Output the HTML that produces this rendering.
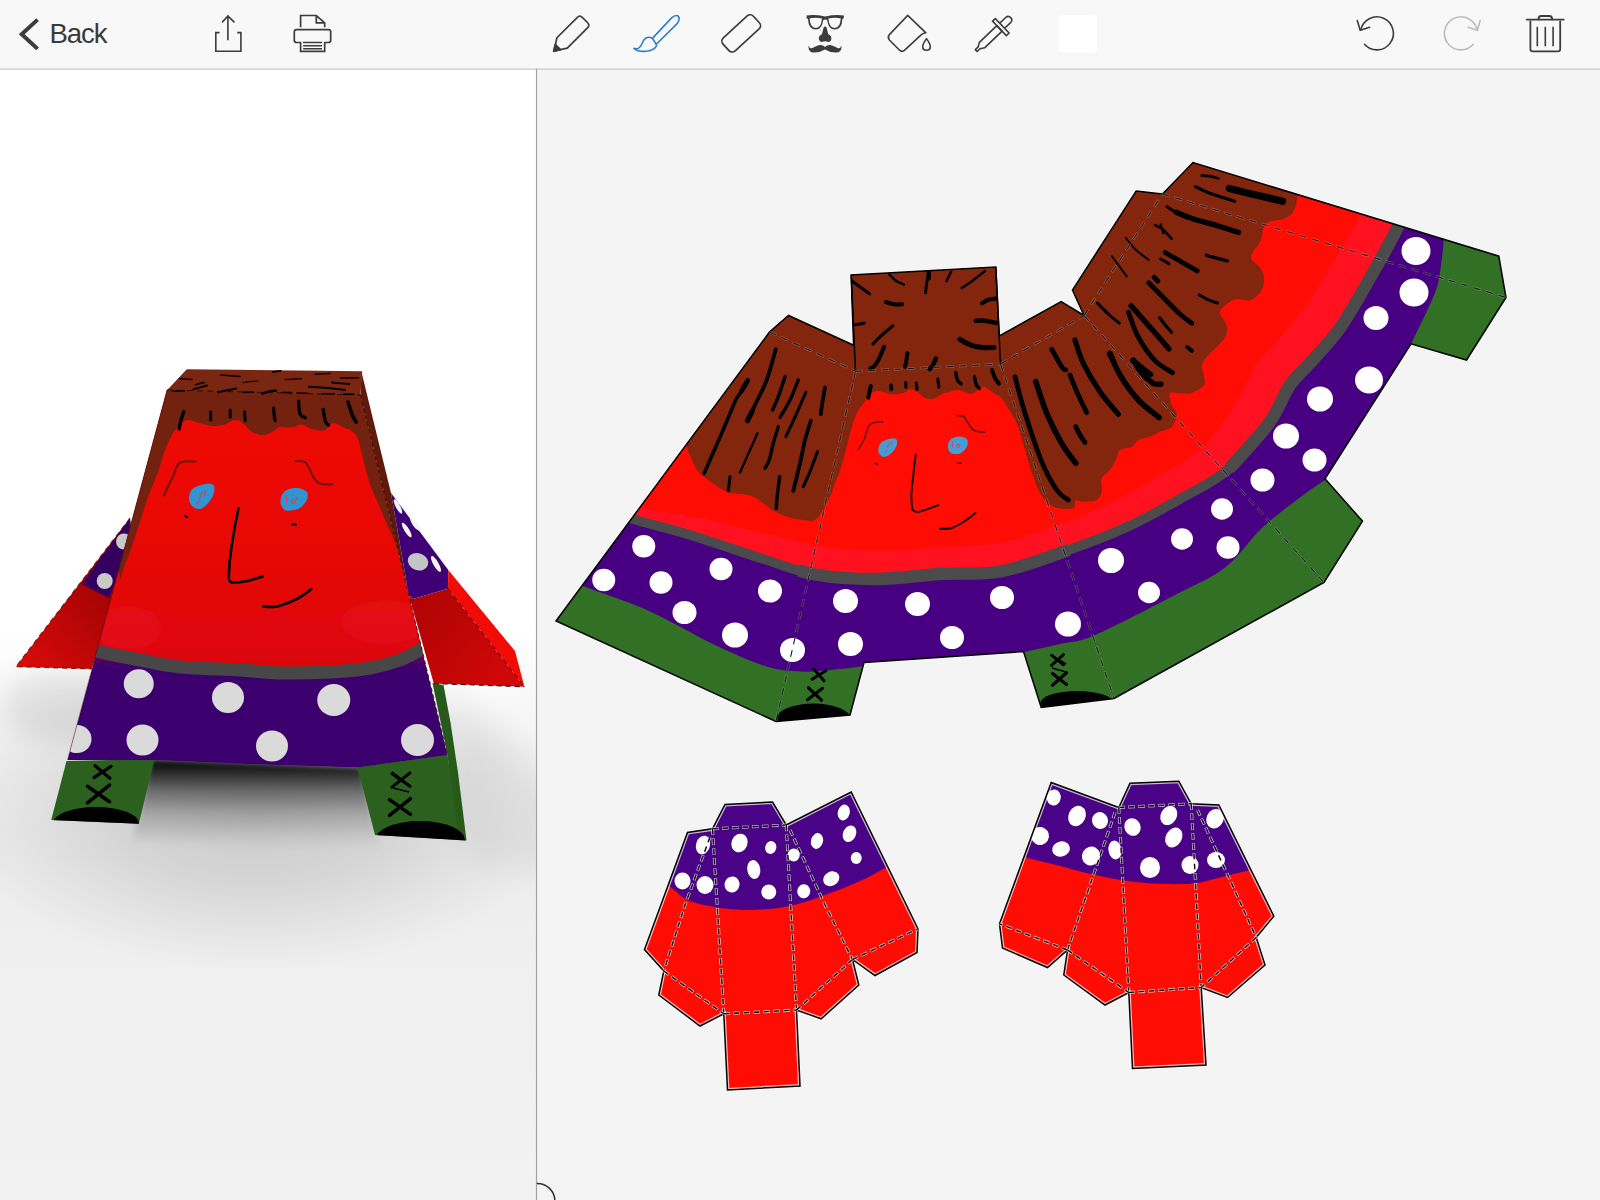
<!DOCTYPE html>
<html><head><meta charset="utf-8">
<style>
html,body{margin:0;padding:0;background:#f4f4f4;}
body{width:1600px;height:1200px;overflow:hidden;position:relative;font-family:"Liberation Sans",sans-serif;}
#bar{position:absolute;left:0;top:0;width:1600px;height:69px;background:#f8f8f8;}
#back{position:absolute;left:49.6px;top:18.1px;font-size:27.6px;line-height:32px;color:#3a3a3a;letter-spacing:-1.15px;}
#left{position:absolute;left:0;top:69px;width:537px;height:1131px;background:#fff;overflow:hidden;}
#right{position:absolute;left:537px;top:69px;width:1063px;height:1131px;background:#f4f4f4;}
svg{position:absolute;left:0;top:0;}
</style></head><body>
<div id="left"></div>
<div id="right"></div>
<div id="bar"><div id="back">Back</div></div>
<svg width="1600" height="1200" viewBox="0 0 1600 1200">
<defs><clipPath id="netclip"><polygon points="556.0,621.0 769.5,332.0 788.5,315.5 853.6,345.2 851.2,275.0 995.8,267.0 999.3,336.0 1061.2,301.5 1084.0,315.5 1072.5,290.0 1136.2,191.0 1162.5,194.0 1193.0,162.5 1498.8,256.2 1506.0,297.5 1466.5,360.0 1411.0,343.8 1325.0,478.8 1362.5,521.2 1324.0,582.5 1114.0,698.5 1041.2,707.5 1023.5,651.5 864.0,662.5 850.0,715.0 776.0,721.5"/></clipPath></defs>
<g clip-path="url(#netclip)">
<rect x="540" y="150" width="1000" height="600" fill="#317025"/>
<path d="M540.0,568.0C547.2,571.0 566.3,579.5 583.0,586.0C599.7,592.5 624.7,600.7 640.0,607.0C655.3,613.3 662.5,617.7 675.0,624.0C687.5,630.3 700.0,638.0 715.0,645.0C730.0,652.0 750.8,661.6 765.0,666.0C779.2,670.4 788.3,670.9 800.0,671.5C811.7,672.1 824.3,670.4 835.0,669.5C845.7,668.6 859.2,666.6 864.0,666.0 L864,676 L1023.5,665 L1023.5,652.0C1029.6,650.7 1048.1,646.8 1060.0,644.0C1071.9,641.2 1075.8,643.2 1095.0,635.0C1114.2,626.8 1153.3,606.2 1175.0,595.0C1196.7,583.8 1210.4,578.8 1225.0,567.5C1239.6,556.2 1250.0,539.2 1262.5,527.5C1275.0,515.8 1289.6,505.4 1300.0,497.5C1310.4,489.6 1320.8,482.9 1325.0,480.0 L1336,486 L1421,350 L1411.0,344.0C1413.3,339.2 1420.8,324.0 1425.0,315.0C1429.2,306.0 1433.5,297.1 1436.0,290.0C1438.5,282.9 1438.7,280.8 1440.0,272.5C1441.3,264.2 1442.8,252.1 1443.8,240.0C1444.8,227.9 1445.6,206.7 1446.0,200.0 L1446,100 L400,100 L400,540 Z" fill="#480082"/>
<path d="M600.0,508.0C605.7,509.9 619.0,515.0 634.0,519.5C649.0,524.0 668.2,528.3 690.0,535.0C711.8,541.7 744.2,552.9 765.0,559.5C785.8,566.1 796.3,571.2 815.0,574.5C833.7,577.8 856.2,579.1 877.0,579.0C897.8,578.9 919.5,575.2 940.0,574.0C960.5,572.8 979.5,575.2 1000.0,571.5C1020.5,567.8 1041.8,559.4 1063.0,552.0C1084.2,544.6 1107.5,535.8 1127.0,527.0C1146.5,518.2 1163.0,508.7 1180.0,499.0C1197.0,489.3 1214.2,481.7 1229.0,469.0C1243.8,456.3 1258.8,437.0 1269.0,423.0C1279.2,409.0 1283.2,395.0 1290.0,385.0C1296.8,375.0 1301.7,372.5 1310.0,363.0C1318.3,353.5 1330.0,342.2 1340.0,328.0C1350.0,313.8 1360.4,294.8 1370.0,278.0C1379.6,261.2 1390.8,241.3 1397.5,227.5C1404.2,213.7 1407.9,200.4 1410.0,195.0 L1410,100 L400,100 L400,480 Z" fill="#ff111f"/>
<path d="M600.0,500.0C608.3,501.7 633.3,507.0 650.0,510.0C666.7,513.0 680.0,513.8 700.0,518.0C720.0,522.2 750.0,530.3 770.0,535.0C790.0,539.7 801.7,543.3 820.0,546.0C838.3,548.7 860.0,550.8 880.0,551.0C900.0,551.2 920.0,548.3 940.0,547.0C960.0,545.7 980.8,546.5 1000.0,543.0C1019.2,539.5 1036.3,532.8 1055.0,526.0C1073.7,519.2 1094.2,510.7 1112.0,502.0C1129.8,493.3 1146.7,483.3 1162.0,474.0C1177.3,464.7 1191.5,458.2 1204.0,446.0C1216.5,433.8 1228.3,414.5 1237.0,401.0C1245.7,387.5 1249.3,375.0 1256.0,365.0C1262.7,355.0 1268.8,350.7 1277.0,341.0C1285.2,331.3 1295.7,320.2 1305.0,307.0C1314.3,293.8 1323.7,277.5 1333.0,262.0C1342.3,246.5 1354.3,226.8 1361.0,214.0C1367.7,201.2 1371.0,189.8 1373.0,185.0 L1380,100 L400,100 L400,440 Z" fill="#ff0d04"/>
<path d="M600.0,508.0C605.7,509.9 619.0,515.0 634.0,519.5C649.0,524.0 668.2,528.3 690.0,535.0C711.8,541.7 744.2,552.9 765.0,559.5C785.8,566.1 796.3,571.2 815.0,574.5C833.7,577.8 856.2,579.1 877.0,579.0C897.8,578.9 919.5,575.2 940.0,574.0C960.5,572.8 979.5,575.2 1000.0,571.5C1020.5,567.8 1041.8,559.4 1063.0,552.0C1084.2,544.6 1107.5,535.8 1127.0,527.0C1146.5,518.2 1163.0,508.7 1180.0,499.0C1197.0,489.3 1214.2,481.7 1229.0,469.0C1243.8,456.3 1262.3,430.7 1269.0,423.0" fill="none" stroke="#4b4b4b" stroke-width="9.6"/>
<clipPath id="frontpart"><polygon points="812,500 1046,480 1118,700 770,725"/></clipPath>
<path d="M600.0,508.0C605.7,509.9 619.0,515.0 634.0,519.5C649.0,524.0 668.2,528.3 690.0,535.0C711.8,541.7 744.2,552.9 765.0,559.5C785.8,566.1 796.3,571.2 815.0,574.5C833.7,577.8 856.2,579.1 877.0,579.0C897.8,578.9 919.5,575.2 940.0,574.0C960.5,572.8 979.5,575.2 1000.0,571.5C1020.5,567.8 1041.8,559.4 1063.0,552.0C1084.2,544.6 1107.5,535.8 1127.0,527.0C1146.5,518.2 1163.0,508.7 1180.0,499.0C1197.0,489.3 1214.2,481.7 1229.0,469.0C1243.8,456.3 1262.3,430.7 1269.0,423.0" fill="none" stroke="#4b4b4b" stroke-width="12.4" clip-path="url(#frontpart)"/>
<path d="M1229.0,469.0C1235.7,461.3 1258.8,437.0 1269.0,423.0C1279.2,409.0 1283.2,395.0 1290.0,385.0C1296.8,375.0 1301.7,372.5 1310.0,363.0C1318.3,353.5 1330.0,342.2 1340.0,328.0C1350.0,313.8 1360.4,294.8 1370.0,278.0C1379.6,261.2 1390.8,241.3 1397.5,227.5C1404.2,213.7 1407.9,200.4 1410.0,195.0" fill="none" stroke="#4b4b4b" stroke-width="12.5"/>
<path d="M686.0,445.0C686.8,447.0 688.5,452.6 690.5,457.0C692.5,461.4 695.3,467.9 698.3,471.7C701.3,475.5 704.7,477.2 708.3,480.0C711.9,482.8 716.4,486.1 720.0,488.3C723.6,490.5 726.1,492.3 730.0,493.3C733.9,494.3 739.4,493.6 743.3,494.2C747.2,494.8 750.0,495.2 753.3,496.7C756.6,498.2 760.0,500.9 763.3,503.3C766.6,505.7 769.4,508.6 773.3,510.8C777.2,513.0 782.2,515.2 786.7,516.7C791.2,518.2 795.6,518.9 800.0,519.5C804.4,520.1 809.9,521.4 813.3,520.5C816.7,519.6 818.5,516.3 820.5,514.0C822.5,511.7 823.4,509.6 825.0,506.7C826.6,503.8 828.3,500.6 830.0,496.7C831.7,492.8 833.3,487.6 835.0,483.3C836.7,479.0 838.2,476.6 840.0,471.0C841.8,465.4 843.9,457.7 846.0,450.0C848.1,442.3 850.5,431.5 852.5,425.0C854.5,418.5 856.3,414.3 858.0,411.0C859.7,407.7 860.8,407.3 862.5,405.0C864.2,402.7 866.1,399.2 868.0,397.0C869.9,394.8 871.6,392.8 873.6,391.8C875.6,390.8 877.0,390.9 880.0,391.2C883.0,391.6 887.8,393.9 891.7,394.2C895.6,394.5 900.2,393.8 903.3,393.0C906.4,392.2 908.0,389.7 910.3,389.5C912.6,389.3 915.0,390.4 917.3,391.8C919.6,393.2 921.6,396.5 924.3,397.7C927.0,398.9 930.8,399.4 933.7,398.8C936.6,398.2 939.1,395.4 941.8,394.2C944.5,393.0 947.5,392.5 950.0,391.8C952.5,391.1 954.7,390.1 957.0,390.1C959.3,390.1 961.7,391.1 964.0,391.8C966.3,392.5 968.9,394.4 971.0,394.2C973.1,394.0 974.8,392.0 976.8,390.7C978.8,389.4 980.8,386.8 982.7,386.6C984.7,386.4 986.4,388.2 988.5,389.5C990.6,390.8 993.3,392.8 995.5,394.2C997.7,395.6 999.4,395.7 1001.5,398.0C1003.6,400.3 1005.3,403.5 1008.0,408.0C1010.7,412.5 1014.7,418.0 1017.5,425.0C1020.3,432.0 1022.5,441.7 1025.0,450.0C1027.5,458.3 1030.0,467.8 1032.5,475.0C1035.0,482.2 1037.4,488.3 1040.0,493.0C1042.6,497.7 1045.2,500.8 1048.3,503.3C1051.3,505.9 1054.1,507.5 1058.3,508.3C1062.5,509.1 1070.4,509.6 1073.3,508.3C1076.2,507.0 1073.8,501.6 1075.5,500.5C1077.2,499.4 1079.8,501.8 1083.3,501.7C1086.8,501.6 1093.6,501.7 1096.7,500.0C1099.8,498.3 1100.9,495.3 1101.7,491.7C1102.5,488.1 1100.3,481.9 1101.7,478.3C1103.1,474.7 1107.5,473.3 1110.0,470.0C1112.5,466.7 1115.0,461.6 1116.7,458.3C1118.4,455.0 1117.5,451.9 1120.0,450.0C1122.5,448.1 1128.7,448.4 1131.7,446.7C1134.8,445.0 1135.2,441.7 1138.3,440.0C1141.3,438.3 1146.4,438.1 1150.0,436.7C1153.6,435.3 1156.7,433.1 1160.0,431.7C1163.3,430.3 1167.5,430.0 1170.0,428.3C1172.5,426.6 1173.9,424.2 1175.0,421.7C1176.1,419.2 1177.2,416.1 1176.7,413.3C1176.2,410.5 1172.8,408.4 1171.7,405.0C1170.6,401.6 1168.6,394.9 1170.0,393.0C1171.4,391.1 1176.4,393.3 1180.0,393.3C1183.6,393.3 1187.7,394.4 1191.7,393.0C1195.7,391.6 1202.0,388.1 1204.0,385.0C1206.0,381.9 1204.1,377.8 1203.7,374.5C1203.3,371.2 1201.2,368.4 1201.8,365.3C1202.4,362.2 1204.5,359.6 1207.3,356.2C1210.0,352.8 1215.2,348.6 1218.3,345.2C1221.4,341.8 1224.3,339.4 1225.7,336.0C1227.1,332.6 1227.5,328.7 1226.6,325.0C1225.7,321.3 1221.0,316.8 1220.2,314.0C1219.4,311.2 1219.6,310.9 1222.0,308.5C1224.4,306.1 1230.2,300.7 1234.8,299.3C1239.4,297.9 1245.2,301.5 1249.5,300.2C1253.8,299.0 1258.0,295.5 1260.5,292.0C1263.0,288.5 1264.2,283.2 1264.2,279.2C1264.2,275.2 1262.7,271.6 1260.5,268.2C1258.3,264.8 1252.5,261.8 1251.3,259.0C1250.1,256.2 1251.7,254.8 1253.2,251.7C1254.7,248.6 1258.7,245.0 1260.5,240.7C1262.3,236.4 1262.7,229.2 1264.2,226.0C1265.7,222.8 1266.4,222.6 1269.7,221.4C1273.0,220.2 1280.3,220.4 1284.3,218.7C1288.3,217.0 1291.3,214.8 1293.5,211.3C1295.7,207.8 1296.8,202.0 1297.2,197.6C1297.6,193.2 1296.2,187.1 1296.0,185.0 L1292,100 L600,100 L600,445 Z" fill="#83260d"/>
<ellipse cx="643.75" cy="546.25" rx="11.5" ry="11.2" fill="#fff"/>
<ellipse cx="603.75" cy="580" rx="11.5" ry="11.2" fill="#fff"/>
<ellipse cx="661" cy="582.5" rx="11.5" ry="11.2" fill="#fff"/>
<ellipse cx="721" cy="569" rx="11.5" ry="11.2" fill="#fff"/>
<ellipse cx="684.5" cy="612.5" rx="12" ry="11.6" fill="#fff"/>
<ellipse cx="770" cy="591" rx="12" ry="11.6" fill="#fff"/>
<ellipse cx="735" cy="635" rx="13" ry="12.6" fill="#fff"/>
<ellipse cx="792.5" cy="650" rx="12.5" ry="12.1" fill="#fff"/>
<ellipse cx="845.5" cy="601" rx="12.5" ry="12.1" fill="#fff"/>
<ellipse cx="850.5" cy="644" rx="12.5" ry="12.1" fill="#fff"/>
<ellipse cx="917.5" cy="604" rx="12.5" ry="12.1" fill="#fff"/>
<ellipse cx="952" cy="637.5" rx="12" ry="11.6" fill="#fff"/>
<ellipse cx="1002" cy="597.5" rx="12" ry="11.6" fill="#fff"/>
<ellipse cx="1068" cy="624" rx="13" ry="12.6" fill="#fff"/>
<ellipse cx="1111" cy="560.5" rx="13" ry="12.6" fill="#fff"/>
<ellipse cx="1149" cy="592.5" rx="11" ry="10.7" fill="#fff"/>
<ellipse cx="1182" cy="539" rx="11" ry="10.7" fill="#fff"/>
<ellipse cx="1228" cy="547.5" rx="11.5" ry="11.2" fill="#fff"/>
<ellipse cx="1222" cy="509" rx="11" ry="10.7" fill="#fff"/>
<ellipse cx="1262.5" cy="480" rx="12" ry="11.6" fill="#fff"/>
<ellipse cx="1286" cy="436" rx="13" ry="12.6" fill="#fff"/>
<ellipse cx="1314.5" cy="460" rx="12" ry="11.6" fill="#fff"/>
<ellipse cx="1320" cy="399" rx="13" ry="12.6" fill="#fff"/>
<ellipse cx="1369" cy="380" rx="14" ry="13.6" fill="#fff"/>
<ellipse cx="1376" cy="318" rx="12.5" ry="12.1" fill="#fff"/>
<ellipse cx="1414" cy="292.5" rx="14.5" ry="14.1" fill="#fff"/>
<ellipse cx="1416" cy="251" rx="14.5" ry="14.1" fill="#fff"/>
<path d="M747.5,380.8C746.2,382.9 742.1,389.8 740.0,393.3C737.9,396.8 738.0,395.0 735.0,401.7C732.0,408.4 726.8,421.4 721.7,433.3C716.6,445.2 707.1,466.6 704.2,473.3" fill="none" stroke="#000" stroke-width="3.56" stroke-linecap="round"/>
<path d="M747.8,380.5C746.8,382.2 742.5,389.2 741.5,391.0" fill="none" stroke="#000" stroke-width="4.83" stroke-linecap="round"/>
<path d="M775.8,349.2C774.3,354.3 770.2,370.7 766.7,380.0C763.2,389.3 758.2,398.2 755.0,405.0C751.8,411.8 748.8,418.2 747.5,420.8" fill="none" stroke="#000" stroke-width="3.79" stroke-linecap="round"/>
<path d="M752.0,411.5C751.2,413.1 748.2,419.2 747.5,420.8" fill="none" stroke="#000" stroke-width="5.05" stroke-linecap="round"/>
<path d="M785.0,376.7C783.9,380.0 780.4,391.1 778.3,396.7C776.2,402.2 773.5,407.8 772.5,410.0" fill="none" stroke="#000" stroke-width="3.44" stroke-linecap="round"/>
<path d="M798.3,380.0C796.9,383.3 793.0,393.8 790.0,400.0C787.0,406.2 781.7,414.6 780.0,417.5" fill="none" stroke="#000" stroke-width="3.44" stroke-linecap="round"/>
<path d="M805.8,392.5C804.3,396.0 800.0,405.9 796.7,413.3C793.4,420.7 787.6,432.8 785.8,436.7" fill="none" stroke="#000" stroke-width="3.11" stroke-linecap="round"/>
<path d="M825.0,387.5C824.6,389.9 823.2,397.2 822.5,401.7C821.8,406.1 821.1,412.1 820.8,414.2" fill="none" stroke="#000" stroke-width="3.79" stroke-linecap="round"/>
<path d="M757.5,433.3C756.2,436.1 752.9,443.5 750.0,450.0C747.1,456.5 741.7,468.8 740.0,472.5" fill="none" stroke="#000" stroke-width="2.30" stroke-linecap="round"/>
<path d="M778.3,426.7C777.5,429.5 774.8,437.8 773.3,443.3C771.8,448.9 770.6,455.8 769.2,460.0C767.8,464.2 765.7,466.9 765.0,468.3" fill="none" stroke="#000" stroke-width="3.44" stroke-linecap="round"/>
<path d="M810.8,420.8C809.8,424.0 806.8,432.9 805.0,440.0C803.2,447.1 802.0,454.8 800.0,463.3C798.0,471.8 794.4,486.2 793.3,490.8" fill="none" stroke="#000" stroke-width="3.79" stroke-linecap="round"/>
<path d="M817.5,451.7C816.2,455.0 812.4,465.9 810.0,471.7C807.6,477.5 804.4,484.2 803.3,486.7" fill="none" stroke="#000" stroke-width="3.11" stroke-linecap="round"/>
<path d="M730.0,476.7C729.7,479.1 728.6,488.4 728.3,490.8" fill="none" stroke="#000" stroke-width="3.11" stroke-linecap="round"/>
<path d="M779.7,476.7C779.3,479.5 778.1,488.0 777.5,493.3C776.9,498.6 776.5,505.8 776.3,508.3" fill="none" stroke="#000" stroke-width="3.44" stroke-linecap="round"/>
<path d="M852.0,281.0C854.9,283.1 866.6,291.7 869.5,293.8" fill="none" stroke="#000" stroke-width="3.08" stroke-linecap="round"/>
<path d="M889.3,274.6C890.5,275.7 893.9,279.4 896.3,281.0C898.7,282.6 902.6,283.9 903.9,284.5" fill="none" stroke="#000" stroke-width="2.52" stroke-linecap="round"/>
<path d="M928.4,272.8C928.1,274.6 927.2,280.0 926.7,283.3C926.2,286.6 925.7,291.1 925.5,292.7" fill="none" stroke="#000" stroke-width="2.94" stroke-linecap="round"/>
<path d="M928.9,272.6C928.9,273.6 928.7,277.5 928.7,278.5" fill="none" stroke="#000" stroke-width="4.20" stroke-linecap="round"/>
<path d="M951.2,271.7C950.4,273.2 947.3,279.4 946.5,281.0" fill="none" stroke="#000" stroke-width="2.52" stroke-linecap="round"/>
<path d="M985.0,271.0C982.9,272.7 976.1,278.2 972.2,281.0C968.3,283.8 963.5,286.8 961.7,288.0" fill="none" stroke="#000" stroke-width="2.52" stroke-linecap="round"/>
<path d="M885.8,302.0C887.2,302.4 891.3,303.9 894.0,304.3C896.7,304.7 900.8,304.3 902.2,304.3" fill="none" stroke="#000" stroke-width="4.06" stroke-linecap="round"/>
<path d="M982.1,303.2C983.2,302.6 986.3,300.5 988.5,299.7C990.7,298.9 994.3,298.7 995.5,298.5" fill="none" stroke="#000" stroke-width="4.06" stroke-linecap="round"/>
<path d="M855.5,324.8C857.0,324.5 862.8,323.3 864.2,323.0" fill="none" stroke="#000" stroke-width="3.08" stroke-linecap="round"/>
<path d="M975.7,320.7C977.2,320.7 981.5,320.3 985.0,320.7C988.5,321.1 994.8,322.6 996.7,323.0" fill="none" stroke="#000" stroke-width="4.48" stroke-linecap="round"/>
<path d="M892.8,325.9C891.0,327.4 885.6,331.7 882.3,334.7C879.0,337.7 874.5,342.4 873.0,344.0" fill="none" stroke="#000" stroke-width="3.08" stroke-linecap="round"/>
<path d="M959.9,339.3C961.8,340.3 967.2,343.8 971.0,345.2C974.8,346.6 978.9,347.1 982.7,347.5C986.5,347.9 991.9,347.5 993.8,347.5" fill="none" stroke="#000" stroke-width="5.04" stroke-linecap="round"/>
<path d="M884.1,346.9C883.2,348.9 880.4,356.0 878.8,359.2C877.1,362.4 875.7,364.6 874.2,366.2C872.8,367.8 870.8,368.1 870.1,368.5" fill="none" stroke="#000" stroke-width="4.06" stroke-linecap="round"/>
<path d="M907.4,353.3C907.2,354.7 906.6,359.3 906.2,361.5C905.9,363.7 905.3,365.9 905.1,366.8" fill="none" stroke="#000" stroke-width="4.06" stroke-linecap="round"/>
<path d="M936.0,358.6C935.4,359.8 933.6,363.9 932.5,365.6C931.4,367.4 930.1,368.5 929.6,369.1" fill="none" stroke="#000" stroke-width="4.48" stroke-linecap="round"/>
<path d="M870.7,386.0C870.3,387.9 868.7,395.8 868.3,397.7" fill="none" stroke="#000" stroke-width="4.06" stroke-linecap="round"/>
<path d="M891.1,385.4C891.1,386.1 891.3,388.8 891.3,389.5" fill="none" stroke="#000" stroke-width="3.64" stroke-linecap="round"/>
<path d="M905.7,382.5C905.7,383.3 905.9,386.4 905.9,387.2" fill="none" stroke="#000" stroke-width="3.08" stroke-linecap="round"/>
<path d="M916.2,383.1C916.4,384.2 917.0,388.4 917.1,389.5" fill="none" stroke="#000" stroke-width="3.08" stroke-linecap="round"/>
<path d="M937.8,379.0C937.9,380.4 938.7,385.8 938.9,387.2" fill="none" stroke="#000" stroke-width="3.08" stroke-linecap="round"/>
<path d="M955.8,372.6C956.1,373.9 956.7,378.4 957.6,380.2C958.5,382.0 960.5,383.1 961.1,383.7" fill="none" stroke="#000" stroke-width="3.50" stroke-linecap="round"/>
<path d="M974.5,376.7C974.8,378.1 975.5,382.9 976.2,384.8C977.0,386.7 978.7,387.7 979.2,388.3" fill="none" stroke="#000" stroke-width="3.50" stroke-linecap="round"/>
<path d="M992.0,370.2C992.6,371.7 994.3,376.8 995.5,379.0C996.7,381.2 998.4,382.9 999.0,383.7" fill="none" stroke="#000" stroke-width="4.06" stroke-linecap="round"/>
<path d="M1015.0,376.7C1016.7,382.8 1020.5,399.1 1025.0,413.3C1029.5,427.5 1036.4,448.9 1041.7,461.7C1047.0,474.5 1052.3,483.6 1056.7,490.0C1061.1,496.4 1066.4,498.3 1068.3,500.0" fill="none" stroke="#000" stroke-width="4.80" stroke-linecap="round"/>
<path d="M1035.8,381.7C1037.6,387.0 1042.4,403.0 1046.7,413.3C1051.0,423.6 1056.9,435.0 1061.7,443.3C1066.5,451.6 1073.5,460.0 1075.8,463.3" fill="none" stroke="#000" stroke-width="5.59" stroke-linecap="round"/>
<path d="M1051.7,349.2C1053.4,352.1 1059.4,363.2 1061.7,366.7C1064.0,370.2 1065.1,369.4 1065.8,370.0" fill="none" stroke="#000" stroke-width="4.80" stroke-linecap="round"/>
<path d="M1070.0,375.0C1071.4,378.3 1075.5,388.8 1078.3,395.0C1081.1,401.2 1085.3,409.6 1086.7,412.5" fill="none" stroke="#000" stroke-width="4.80" stroke-linecap="round"/>
<path d="M1075.0,340.0C1076.4,343.9 1079.1,354.7 1083.3,363.3C1087.5,371.9 1094.2,383.2 1100.0,391.7C1105.8,400.2 1115.2,410.4 1118.3,414.2" fill="none" stroke="#000" stroke-width="5.21" stroke-linecap="round"/>
<path d="M1110.0,353.3C1111.7,356.9 1115.3,367.2 1120.0,375.0C1124.7,382.8 1131.8,392.9 1138.3,400.0C1144.8,407.1 1155.7,414.6 1159.2,417.5" fill="none" stroke="#000" stroke-width="5.59" stroke-linecap="round"/>
<path d="M1133.3,360.0C1134.7,362.2 1138.4,369.4 1141.7,373.3C1145.0,377.2 1150.1,381.5 1153.3,383.3C1156.5,385.1 1159.5,384.1 1160.8,384.2" fill="none" stroke="#000" stroke-width="5.46" stroke-linecap="round"/>
<path d="M1075.8,426.7C1076.5,428.1 1078.5,432.4 1080.0,435.0C1081.5,437.6 1084.2,441.2 1085.0,442.5" fill="none" stroke="#000" stroke-width="4.80" stroke-linecap="round"/>
<path d="M1229.3,188.4C1233.6,189.5 1246.1,192.7 1255.0,194.8C1263.9,196.9 1277.9,200.2 1282.5,201.2" fill="none" stroke="#000" stroke-width="7.29" stroke-linecap="round"/>
<path d="M1201.8,175.6C1203.0,175.7 1206.5,175.6 1209.2,176.1C1212.0,176.6 1216.8,177.9 1218.3,178.3" fill="none" stroke="#000" stroke-width="2.60" stroke-linecap="round"/>
<path d="M1195.4,186.6C1197.7,187.7 1202.6,190.6 1209.2,193.0C1215.8,195.4 1230.5,199.9 1234.8,201.2" fill="none" stroke="#000" stroke-width="3.00" stroke-linecap="round"/>
<path d="M1167.0,206.8C1168.5,207.7 1171.9,210.3 1176.2,212.2C1180.5,214.2 1190.0,217.6 1192.7,218.7" fill="none" stroke="#000" stroke-width="3.00" stroke-linecap="round"/>
<path d="M1176.2,212.2C1179.0,213.3 1185.7,216.4 1192.7,218.7C1199.7,221.0 1210.7,223.7 1218.3,226.0C1225.9,228.3 1235.1,231.3 1238.5,232.4" fill="none" stroke="#000" stroke-width="5.31" stroke-linecap="round"/>
<path d="M1155.1,225.1C1156.5,225.9 1160.5,227.4 1163.3,229.7C1166.0,232.0 1170.2,237.3 1171.6,238.8" fill="none" stroke="#000" stroke-width="2.60" stroke-linecap="round"/>
<path d="M1160.6,224.2C1161.0,225.7 1162.8,231.8 1163.3,233.3" fill="none" stroke="#000" stroke-width="2.20" stroke-linecap="round"/>
<path d="M1125.8,237.9C1127.4,239.9 1132.0,246.1 1135.8,249.8C1139.6,253.5 1146.5,258.2 1148.7,259.9" fill="none" stroke="#000" stroke-width="1.90" stroke-linecap="round"/>
<path d="M1165.2,252.6C1167.3,253.8 1172.7,256.8 1178.0,259.9C1183.3,262.9 1194.0,269.1 1197.2,270.9" fill="none" stroke="#000" stroke-width="4.80" stroke-linecap="round"/>
<path d="M1160.6,259.0C1162.0,259.8 1167.4,262.8 1168.8,263.6" fill="none" stroke="#000" stroke-width="3.00" stroke-linecap="round"/>
<path d="M1206.4,255.3C1208.1,255.8 1213.0,257.2 1216.5,258.1C1220.0,259.0 1225.7,260.4 1227.5,260.8" fill="none" stroke="#000" stroke-width="3.30" stroke-linecap="round"/>
<path d="M1112.0,256.2C1113.2,257.9 1116.8,262.9 1119.3,266.3C1121.8,269.7 1125.5,274.7 1126.7,276.4" fill="none" stroke="#000" stroke-width="1.90" stroke-linecap="round"/>
<path d="M1154.2,277.3C1154.8,277.9 1157.2,280.4 1157.8,281.0" fill="none" stroke="#000" stroke-width="5.00" stroke-linecap="round"/>
<path d="M1148.7,282.8C1151.1,285.2 1158.1,292.3 1163.3,297.5C1168.5,302.7 1175.1,309.7 1179.8,314.0C1184.5,318.3 1189.8,321.7 1191.8,323.2" fill="none" stroke="#000" stroke-width="4.80" stroke-linecap="round"/>
<path d="M1199.1,294.8C1200.5,295.5 1204.2,297.9 1207.3,299.3C1210.3,300.7 1215.7,302.4 1217.4,303.0" fill="none" stroke="#000" stroke-width="3.00" stroke-linecap="round"/>
<path d="M1097.3,303.0C1099.1,304.8 1104.6,310.6 1108.3,314.0C1112.0,317.4 1117.5,321.7 1119.3,323.2" fill="none" stroke="#000" stroke-width="3.00" stroke-linecap="round"/>
<path d="M1131.2,305.8C1133.2,308.0 1138.8,314.5 1143.2,319.5C1147.6,324.5 1153.5,331.1 1157.8,336.0C1162.1,340.9 1167.0,346.7 1168.8,348.8" fill="none" stroke="#000" stroke-width="5.50" stroke-linecap="round"/>
<path d="M1159.7,317.7C1160.6,318.9 1163.2,322.6 1165.2,325.0C1167.2,327.4 1170.5,331.1 1171.6,332.3" fill="none" stroke="#000" stroke-width="3.30" stroke-linecap="round"/>
<path d="M1187.2,347.0C1188.0,347.6 1191.0,350.1 1191.8,350.7" fill="none" stroke="#000" stroke-width="4.00" stroke-linecap="round"/>
<path d="M1128.5,312.2C1130.0,316.2 1133.4,328.1 1137.7,336.0C1142.0,343.9 1148.4,353.7 1154.2,359.8C1160.0,365.9 1169.5,370.6 1172.5,372.7" fill="none" stroke="#000" stroke-width="4.80" stroke-linecap="round"/>
<path d="M1133.1,360.8C1134.5,361.8 1138.4,364.9 1141.3,367.2C1144.2,369.5 1149.0,373.3 1150.5,374.5" fill="none" stroke="#000" stroke-width="5.50" stroke-linecap="round"/>
<path d="M1108.3,354.3C1109.5,356.4 1113.2,362.9 1115.7,367.2C1118.2,371.5 1121.8,377.9 1123.0,380.0" fill="none" stroke="#000" stroke-width="3.30" stroke-linecap="round"/>
<ellipse cx="813.5" cy="718.5" rx="37" ry="15" fill="#000"/>
<ellipse cx="1077" cy="703" rx="36.5" ry="12" fill="#000"/>
<path d="M813,670.2L825,679.8M825,669.6L813,680.4" stroke="#000" stroke-width="3" fill="none" stroke-linecap="round" transform="rotate(10 819 675)"/>
<path d="M808,688.4L822,699.6M822,687.7L808,700.3" stroke="#000" stroke-width="3.2" fill="none" stroke-linecap="round" transform="rotate(5 815 694)"/>
<path d="M1051.5,655.2L1063.5,664.8M1063.5,654.6L1051.5,665.4" stroke="#000" stroke-width="2.8" fill="none" stroke-linecap="round" transform="rotate(0 1057.5 660)"/>
<path d="M1052.5,673.4L1066.5,684.6M1066.5,672.7L1052.5,685.3" stroke="#000" stroke-width="3.2" fill="none" stroke-linecap="round" transform="rotate(0 1059.5 679)"/>
<path d="M1051,655L1066,664M1052,668L1066,672" stroke="#000" stroke-width="1.6" fill="none"/>
<g fill="none" stroke="#1a0000" stroke-linecap="round" stroke-linejoin="round">
<path d="M858.4,449.4Q862,444 864.6,438.75Q866.5,432 868,427.5Q869.5,424 872.5,423Q877,421.8 882.6,421.9" stroke="#6e1404" stroke-width="1.6"/>
<path d="M956.9,415.7Q960.5,415.4 963.6,416.25Q966,419.5 968.1,423Q970.5,427.5 973.75,430.3Q978.5,432.5 985,432" stroke="#6e1404" stroke-width="1.6"/>
<path d="M915.8,454.5Q914.2,466 913,478.1Q911.8,487 911.3,495Q911.3,503 912.4,509.6Q914.5,512.4 918.6,511.9Q923.5,510.6 927.6,509.1Q933,507 938.3,505.1" stroke-width="2"/>
<path d="M940,528.75Q946,529 951.25,528.2Q958,525.5 963.6,522Q970,517.8 975.4,513" stroke-width="2"/>
<path d="M875.6,463.5L877.4,464.1M957.8,463.2H960.6" stroke-width="1.6"/>
</g>
<path d="M878.1,450Q878.6,445 881.5,442.1Q887,438.6 892.75,438.2Q897,438.4 897.25,441Q897.4,445.5 895,448.9Q892,453.2 888.25,455.6Q885,457.4 882.6,456.75Q878.4,454.5 878.1,450Z" fill="#469dd4"/>
<path d="M947.9,445.5Q948.4,441.2 951.25,438.75Q955.5,436.4 960.25,436.5Q965.2,437 967.6,439.9Q968.4,444.4 966.4,447.75Q964,451.4 960.25,453.4Q955.5,454.6 951.25,453.4Q947.6,450.4 947.9,445.5Z" fill="#469dd4"/>
<path d="M889.5,442.5l-2,5 M892.2,441.5l-0.8,3.4 M885.6,452.2l1.6,-2" stroke="#c4506a" stroke-width="1.1" fill="none" stroke-linecap="round"/>
<path d="M952.6,441.6v5.4 M958.2,444.4a1.5,1.6 0 1 0 0.1,0" stroke="#c4506a" stroke-width="1.1" fill="none" stroke-linecap="round"/>
</g>
<polygon points="556.0,621.0 769.5,332.0 788.5,315.5 853.6,345.2 851.2,275.0 995.8,267.0 999.3,336.0 1061.2,301.5 1084.0,315.5 1072.5,290.0 1136.2,191.0 1162.5,194.0 1193.0,162.5 1498.8,256.2 1506.0,297.5 1466.5,360.0 1411.0,343.8 1325.0,478.8 1362.5,521.2 1324.0,582.5 1114.0,698.5 1041.2,707.5 1023.5,651.5 864.0,662.5 850.0,715.0 776.0,721.5" fill="none" stroke="#000" stroke-width="1.5" stroke-linejoin="miter"/>
<polyline points="851.2,275.0 855.5,371.2" stroke="#000" stroke-width="1.5" fill="none"/>
<polyline points="995.8,267.0 1000.5,364.0" stroke="#000" stroke-width="1.5" fill="none"/>
<line x1="769.5" y1="332" x2="855.5" y2="371.25" stroke="#fff" stroke-opacity="0.24" stroke-width="2.6" stroke-dasharray="8 5" stroke-dashoffset="0.5"/>
<line x1="769.5" y1="332" x2="855.5" y2="371.25" stroke="#111" stroke-width="1.05" stroke-dasharray="7 6"/>
<line x1="855.5" y1="371.25" x2="776" y2="721.5" stroke="#fff" stroke-opacity="0.24" stroke-width="2.6" stroke-dasharray="8 5" stroke-dashoffset="0.5"/>
<line x1="855.5" y1="371.25" x2="776" y2="721.5" stroke="#111" stroke-width="1.05" stroke-dasharray="7 6"/>
<line x1="855.5" y1="371.25" x2="1000.5" y2="364" stroke="#fff" stroke-opacity="0.24" stroke-width="2.6" stroke-dasharray="8 5" stroke-dashoffset="0.5"/>
<line x1="855.5" y1="371.25" x2="1000.5" y2="364" stroke="#111" stroke-width="1.05" stroke-dasharray="7 6"/>
<line x1="1000.5" y1="364" x2="1114" y2="698.5" stroke="#fff" stroke-opacity="0.24" stroke-width="2.6" stroke-dasharray="8 5" stroke-dashoffset="0.5"/>
<line x1="1000.5" y1="364" x2="1114" y2="698.5" stroke="#111" stroke-width="1.05" stroke-dasharray="7 6"/>
<line x1="1000.5" y1="364" x2="1084" y2="315.5" stroke="#fff" stroke-opacity="0.24" stroke-width="2.6" stroke-dasharray="8 5" stroke-dashoffset="0.5"/>
<line x1="1000.5" y1="364" x2="1084" y2="315.5" stroke="#111" stroke-width="1.05" stroke-dasharray="7 6"/>
<line x1="1084" y1="315.5" x2="1324" y2="582.5" stroke="#fff" stroke-opacity="0.24" stroke-width="2.6" stroke-dasharray="8 5" stroke-dashoffset="0.5"/>
<line x1="1084" y1="315.5" x2="1324" y2="582.5" stroke="#111" stroke-width="1.05" stroke-dasharray="7 6"/>
<line x1="1084" y1="315.5" x2="1162.5" y2="194" stroke="#fff" stroke-opacity="0.24" stroke-width="2.6" stroke-dasharray="8 5" stroke-dashoffset="0.5"/>
<line x1="1084" y1="315.5" x2="1162.5" y2="194" stroke="#111" stroke-width="1.05" stroke-dasharray="7 6"/>
<line x1="1162.5" y1="194" x2="1506" y2="297.5" stroke="#fff" stroke-opacity="0.24" stroke-width="2.6" stroke-dasharray="8 5" stroke-dashoffset="0.5"/>
<line x1="1162.5" y1="194" x2="1506" y2="297.5" stroke="#111" stroke-width="1.05" stroke-dasharray="7 6"/>
<defs><clipPath id="hclip1"><polygon points="725.0,804.5 772.5,802.0 786.2,825.0 851.2,792.0 918.0,928.8 917.0,952.5 875.0,975.5 852.5,959.5 858.8,985.0 821.2,1018.8 796.5,1010.0 800.0,1086.0 727.5,1090.0 723.8,1013.8 700.0,1026.0 658.8,995.0 663.8,971.0 644.5,949.5 687.5,832.5 712.5,828.8"/></clipPath></defs>
<g clip-path="url(#hclip1)">
<polygon points="725.0,804.5 772.5,802.0 786.2,825.0 851.2,792.0 918.0,928.8 917.0,952.5 875.0,975.5 852.5,959.5 858.8,985.0 821.2,1018.8 796.5,1010.0 800.0,1086.0 727.5,1090.0 723.8,1013.8 700.0,1026.0 658.8,995.0 663.8,971.0 644.5,949.5 687.5,832.5 712.5,828.8" fill="#ff0d04"/>
<path d="M640.0,872.0C644.8,874.3 660.8,881.3 668.8,886.0C676.7,890.7 679.4,896.4 687.5,900.0C695.6,903.6 707.1,905.8 717.5,907.5C727.9,909.2 737.9,910.2 750.0,910.0C762.1,909.8 777.5,908.5 790.0,906.0C802.5,903.5 812.9,899.3 825.0,895.0C837.1,890.7 851.9,884.8 862.5,880.0C873.1,875.2 879.2,871.0 888.8,866.0C898.3,861.0 914.8,852.7 920.0,850.0 L930,780 L640,780 Z" fill="#4a0386"/>
<ellipse cx="703" cy="845" rx="7" ry="9.5" fill="#fff" transform="rotate(15 703 845)"/>
<ellipse cx="739.5" cy="843" rx="8" ry="9.5" fill="#fff" transform="rotate(20 739.5 843)"/>
<ellipse cx="770.75" cy="847.5" rx="5.5" ry="6.5" fill="#fff" transform="rotate(20 770.75 847.5)"/>
<ellipse cx="793.75" cy="855" rx="6" ry="6.5" fill="#fff" transform="rotate(0 793.75 855)"/>
<ellipse cx="817" cy="841" rx="6" ry="8" fill="#fff" transform="rotate(15 817 841)"/>
<ellipse cx="843.75" cy="812.5" rx="6" ry="8" fill="#fff" transform="rotate(15 843.75 812.5)"/>
<ellipse cx="849.5" cy="833.75" rx="6.5" ry="8.5" fill="#fff" transform="rotate(25 849.5 833.75)"/>
<ellipse cx="856.25" cy="858" rx="5.5" ry="6" fill="#fff" transform="rotate(0 856.25 858)"/>
<ellipse cx="831.25" cy="878.75" rx="8.5" ry="7" fill="#fff" transform="rotate(-30 831.25 878.75)"/>
<ellipse cx="803.75" cy="891.25" rx="6.5" ry="7" fill="#fff" transform="rotate(10 803.75 891.25)"/>
<ellipse cx="768.75" cy="892" rx="7.5" ry="7.5" fill="#fff" transform="rotate(0 768.75 892)"/>
<ellipse cx="753.75" cy="869.5" rx="6.5" ry="9.5" fill="#fff" transform="rotate(-10 753.75 869.5)"/>
<ellipse cx="732" cy="884.5" rx="7.5" ry="8" fill="#fff" transform="rotate(10 732 884.5)"/>
<ellipse cx="705" cy="885" rx="8.5" ry="9" fill="#fff" transform="rotate(0 705 885)"/>
<ellipse cx="682.5" cy="881" rx="8" ry="8.5" fill="#fff" transform="rotate(0 682.5 881)"/>
<polygon points="725.0,804.5 772.5,802.0 786.2,825.0 851.2,792.0 918.0,928.8 917.0,952.5 875.0,975.5 852.5,959.5 858.8,985.0 821.2,1018.8 796.5,1010.0 800.0,1086.0 727.5,1090.0 723.8,1013.8 700.0,1026.0 658.8,995.0 663.8,971.0 644.5,949.5 687.5,832.5 712.5,828.8" fill="none" stroke="#fff" stroke-opacity="0.7" stroke-width="4"/>
</g>
<polygon points="725.0,804.5 772.5,802.0 786.2,825.0 851.2,792.0 918.0,928.8 917.0,952.5 875.0,975.5 852.5,959.5 858.8,985.0 821.2,1018.8 796.5,1010.0 800.0,1086.0 727.5,1090.0 723.8,1013.8 700.0,1026.0 658.8,995.0 663.8,971.0 644.5,949.5 687.5,832.5 712.5,828.8" fill="none" stroke="#000" stroke-width="1.5" stroke-linejoin="miter"/>
<polyline points="712.5,828.8 786.2,825.0" fill="none" stroke="#fff" stroke-opacity="0.72" stroke-width="3" stroke-dasharray="6.6 3.4" stroke-dashoffset="0.5"/>
<polyline points="712.5,828.8 786.2,825.0" fill="none" stroke="#000" stroke-width="1.4" stroke-dasharray="5.6 4.4"/>
<polyline points="712.5,828.8 723.8,1013.8" fill="none" stroke="#fff" stroke-opacity="0.72" stroke-width="3" stroke-dasharray="6.6 3.4" stroke-dashoffset="0.5"/>
<polyline points="712.5,828.8 723.8,1013.8" fill="none" stroke="#000" stroke-width="1.4" stroke-dasharray="5.6 4.4"/>
<polyline points="786.2,825.0 796.5,1010.0" fill="none" stroke="#fff" stroke-opacity="0.72" stroke-width="3" stroke-dasharray="6.6 3.4" stroke-dashoffset="0.5"/>
<polyline points="786.2,825.0 796.5,1010.0" fill="none" stroke="#000" stroke-width="1.4" stroke-dasharray="5.6 4.4"/>
<polyline points="723.8,1013.8 796.5,1010.0" fill="none" stroke="#fff" stroke-opacity="0.72" stroke-width="3" stroke-dasharray="6.6 3.4" stroke-dashoffset="0.5"/>
<polyline points="723.8,1013.8 796.5,1010.0" fill="none" stroke="#000" stroke-width="1.4" stroke-dasharray="5.6 4.4"/>
<polyline points="710.0,837.0 685.0,905.0 663.8,971.0" fill="none" stroke="#fff" stroke-opacity="0.72" stroke-width="3" stroke-dasharray="6.6 3.4" stroke-dashoffset="0.5"/>
<polyline points="710.0,837.0 685.0,905.0 663.8,971.0" fill="none" stroke="#000" stroke-width="1.4" stroke-dasharray="5.6 4.4"/>
<polyline points="663.8,971.0 723.8,1013.8" fill="none" stroke="#fff" stroke-opacity="0.72" stroke-width="3" stroke-dasharray="6.6 3.4" stroke-dashoffset="0.5"/>
<polyline points="663.8,971.0 723.8,1013.8" fill="none" stroke="#000" stroke-width="1.4" stroke-dasharray="5.6 4.4"/>
<polyline points="790.0,830.0 825.0,905.0 852.5,959.5" fill="none" stroke="#fff" stroke-opacity="0.72" stroke-width="3" stroke-dasharray="6.6 3.4" stroke-dashoffset="0.5"/>
<polyline points="790.0,830.0 825.0,905.0 852.5,959.5" fill="none" stroke="#000" stroke-width="1.4" stroke-dasharray="5.6 4.4"/>
<polyline points="852.5,959.5 796.5,1010.0" fill="none" stroke="#fff" stroke-opacity="0.72" stroke-width="3" stroke-dasharray="6.6 3.4" stroke-dashoffset="0.5"/>
<polyline points="852.5,959.5 796.5,1010.0" fill="none" stroke="#000" stroke-width="1.4" stroke-dasharray="5.6 4.4"/>
<polyline points="852.5,959.5 918.0,928.8" fill="none" stroke="#fff" stroke-opacity="0.72" stroke-width="3" stroke-dasharray="6.6 3.4" stroke-dashoffset="0.5"/>
<polyline points="852.5,959.5 918.0,928.8" fill="none" stroke="#000" stroke-width="1.4" stroke-dasharray="5.6 4.4"/>
<defs><clipPath id="hclip2"><polygon points="1130.0,783.2 1178.8,781.2 1191.2,803.8 1218.8,805.0 1273.8,916.2 1256.2,937.5 1265.0,965.0 1227.5,997.5 1201.2,987.5 1206.0,1065.0 1132.5,1068.5 1128.8,992.5 1105.0,1005.0 1063.8,975.0 1067.5,950.0 1047.5,967.5 1002.5,948.0 999.5,923.8 1051.2,782.5 1118.8,807.5"/></clipPath></defs>
<g clip-path="url(#hclip2)">
<polygon points="1130.0,783.2 1178.8,781.2 1191.2,803.8 1218.8,805.0 1273.8,916.2 1256.2,937.5 1265.0,965.0 1227.5,997.5 1201.2,987.5 1206.0,1065.0 1132.5,1068.5 1128.8,992.5 1105.0,1005.0 1063.8,975.0 1067.5,950.0 1047.5,967.5 1002.5,948.0 999.5,923.8 1051.2,782.5 1118.8,807.5" fill="#ff0d04"/>
<path d="M1000.0,848.0C1004.4,849.6 1016.2,854.5 1026.2,857.5C1036.2,860.5 1048.5,863.1 1060.0,866.0C1071.5,868.9 1081.7,872.2 1095.0,875.0C1108.3,877.8 1124.2,881.0 1140.0,882.5C1155.8,884.0 1176.7,884.6 1190.0,883.8C1203.3,882.9 1210.0,879.8 1220.0,877.5C1230.0,875.2 1239.2,872.6 1250.0,870.0C1260.8,867.4 1279.2,863.3 1285.0,862.0 L1290,770 L1000,770 Z" fill="#4a0386"/>
<ellipse cx="1053.75" cy="797.5" rx="7" ry="8" fill="#fff" transform="rotate(10 1053.75 797.5)"/>
<ellipse cx="1077" cy="816" rx="8.5" ry="10.5" fill="#fff" transform="rotate(25 1077 816)"/>
<ellipse cx="1100" cy="820.5" rx="8" ry="8.5" fill="#fff" transform="rotate(-20 1100 820.5)"/>
<ellipse cx="1040" cy="836" rx="9" ry="9" fill="#fff" transform="rotate(30 1040 836)"/>
<ellipse cx="1061" cy="849" rx="9" ry="7.5" fill="#fff" transform="rotate(-15 1061 849)"/>
<ellipse cx="1091" cy="856" rx="9" ry="9.5" fill="#fff" transform="rotate(30 1091 856)"/>
<ellipse cx="1115" cy="850" rx="6.5" ry="9.5" fill="#fff" transform="rotate(-10 1115 850)"/>
<ellipse cx="1132.5" cy="827" rx="8" ry="9" fill="#fff" transform="rotate(-25 1132.5 827)"/>
<ellipse cx="1168.75" cy="815.5" rx="8" ry="10" fill="#fff" transform="rotate(30 1168.75 815.5)"/>
<ellipse cx="1173.75" cy="837.5" rx="8" ry="10.5" fill="#fff" transform="rotate(30 1173.75 837.5)"/>
<ellipse cx="1150" cy="867.5" rx="10" ry="10.5" fill="#fff" transform="rotate(0 1150 867.5)"/>
<ellipse cx="1190" cy="865" rx="8.5" ry="9" fill="#fff" transform="rotate(0 1190 865)"/>
<ellipse cx="1216" cy="860" rx="9" ry="8" fill="#fff" transform="rotate(0 1216 860)"/>
<ellipse cx="1215" cy="818.75" rx="8.5" ry="10" fill="#fff" transform="rotate(25 1215 818.75)"/>
<polygon points="1130.0,783.2 1178.8,781.2 1191.2,803.8 1218.8,805.0 1273.8,916.2 1256.2,937.5 1265.0,965.0 1227.5,997.5 1201.2,987.5 1206.0,1065.0 1132.5,1068.5 1128.8,992.5 1105.0,1005.0 1063.8,975.0 1067.5,950.0 1047.5,967.5 1002.5,948.0 999.5,923.8 1051.2,782.5 1118.8,807.5" fill="none" stroke="#fff" stroke-opacity="0.7" stroke-width="4"/>
</g>
<polygon points="1130.0,783.2 1178.8,781.2 1191.2,803.8 1218.8,805.0 1273.8,916.2 1256.2,937.5 1265.0,965.0 1227.5,997.5 1201.2,987.5 1206.0,1065.0 1132.5,1068.5 1128.8,992.5 1105.0,1005.0 1063.8,975.0 1067.5,950.0 1047.5,967.5 1002.5,948.0 999.5,923.8 1051.2,782.5 1118.8,807.5" fill="none" stroke="#000" stroke-width="1.5" stroke-linejoin="miter"/>
<polyline points="1118.8,807.5 1191.2,803.8" fill="none" stroke="#fff" stroke-opacity="0.72" stroke-width="3" stroke-dasharray="6.6 3.4" stroke-dashoffset="0.5"/>
<polyline points="1118.8,807.5 1191.2,803.8" fill="none" stroke="#000" stroke-width="1.4" stroke-dasharray="5.6 4.4"/>
<polyline points="1118.8,807.5 1128.8,992.5" fill="none" stroke="#fff" stroke-opacity="0.72" stroke-width="3" stroke-dasharray="6.6 3.4" stroke-dashoffset="0.5"/>
<polyline points="1118.8,807.5 1128.8,992.5" fill="none" stroke="#000" stroke-width="1.4" stroke-dasharray="5.6 4.4"/>
<polyline points="1191.2,803.8 1201.2,987.5" fill="none" stroke="#fff" stroke-opacity="0.72" stroke-width="3" stroke-dasharray="6.6 3.4" stroke-dashoffset="0.5"/>
<polyline points="1191.2,803.8 1201.2,987.5" fill="none" stroke="#000" stroke-width="1.4" stroke-dasharray="5.6 4.4"/>
<polyline points="1128.8,992.5 1201.2,987.5" fill="none" stroke="#fff" stroke-opacity="0.72" stroke-width="3" stroke-dasharray="6.6 3.4" stroke-dashoffset="0.5"/>
<polyline points="1128.8,992.5 1201.2,987.5" fill="none" stroke="#000" stroke-width="1.4" stroke-dasharray="5.6 4.4"/>
<polyline points="1115.0,812.5 1090.0,885.0 1067.5,950.0" fill="none" stroke="#fff" stroke-opacity="0.72" stroke-width="3" stroke-dasharray="6.6 3.4" stroke-dashoffset="0.5"/>
<polyline points="1115.0,812.5 1090.0,885.0 1067.5,950.0" fill="none" stroke="#000" stroke-width="1.4" stroke-dasharray="5.6 4.4"/>
<polyline points="1067.5,950.0 1128.8,992.5" fill="none" stroke="#fff" stroke-opacity="0.72" stroke-width="3" stroke-dasharray="6.6 3.4" stroke-dashoffset="0.5"/>
<polyline points="1067.5,950.0 1128.8,992.5" fill="none" stroke="#000" stroke-width="1.4" stroke-dasharray="5.6 4.4"/>
<polyline points="1067.5,950.0 999.5,923.8" fill="none" stroke="#fff" stroke-opacity="0.72" stroke-width="3" stroke-dasharray="6.6 3.4" stroke-dashoffset="0.5"/>
<polyline points="1067.5,950.0 999.5,923.8" fill="none" stroke="#000" stroke-width="1.4" stroke-dasharray="5.6 4.4"/>
<polyline points="1197.5,810.0 1230.0,880.0 1256.2,937.5" fill="none" stroke="#fff" stroke-opacity="0.72" stroke-width="3" stroke-dasharray="6.6 3.4" stroke-dashoffset="0.5"/>
<polyline points="1197.5,810.0 1230.0,880.0 1256.2,937.5" fill="none" stroke="#000" stroke-width="1.4" stroke-dasharray="5.6 4.4"/>
<polyline points="1256.2,937.5 1201.2,987.5" fill="none" stroke="#fff" stroke-opacity="0.72" stroke-width="3" stroke-dasharray="6.6 3.4" stroke-dashoffset="0.5"/>
<polyline points="1256.2,937.5 1201.2,987.5" fill="none" stroke="#000" stroke-width="1.4" stroke-dasharray="5.6 4.4"/>
<defs>
<linearGradient id="floor" gradientUnits="userSpaceOnUse" x1="0" y1="69" x2="0" y2="1200"><stop offset="0.0000" stop-color="#ffffff"/><stop offset="0.4872" stop-color="#ffffff"/><stop offset="0.5225" stop-color="#fcfcfc"/><stop offset="0.5579" stop-color="#f8f8f8"/><stop offset="0.6110" stop-color="#f1f1f1"/><stop offset="0.6729" stop-color="#ededed"/><stop offset="0.7347" stop-color="#eeeeee"/><stop offset="0.8232" stop-color="#f0f0f0"/><stop offset="0.9116" stop-color="#f1f1f1"/><stop offset="1.0000" stop-color="#f2f2f2"/></linearGradient>
<radialGradient id="floorlight" gradientUnits="userSpaceOnUse" cx="270" cy="640" r="330" gradientTransform="translate(270 640) scale(1 0.55) translate(-270 -640)"><stop offset="0" stop-color="#fff" stop-opacity="1"/><stop offset="0.6" stop-color="#fff" stop-opacity="0.85"/><stop offset="1" stop-color="#fff" stop-opacity="0"/></radialGradient>
<linearGradient id="ushadow" gradientUnits="userSpaceOnUse" x1="0" y1="758" x2="0" y2="850"><stop offset="0" stop-color="#000" stop-opacity="1"/><stop offset="0.12" stop-color="#000" stop-opacity="0.86"/><stop offset="0.35" stop-color="#000" stop-opacity="0.5"/><stop offset="0.6" stop-color="#000" stop-opacity="0.22"/><stop offset="0.85" stop-color="#000" stop-opacity="0.06"/><stop offset="1" stop-color="#000" stop-opacity="0"/></linearGradient>
<linearGradient id="redsh" gradientUnits="userSpaceOnUse" x1="0" y1="390" x2="0" y2="670"><stop offset="0" stop-color="#f00a04"/><stop offset="0.5" stop-color="#e90804"/><stop offset="0.8" stop-color="#e00806"/><stop offset="1" stop-color="#d90808"/></linearGradient>
<linearGradient id="armL" gradientUnits="userSpaceOnUse" x1="110" y1="590" x2="20" y2="668"><stop offset="0" stop-color="#a20303"/><stop offset="1" stop-color="#dc0a0a"/></linearGradient>
<linearGradient id="armR" gradientUnits="userSpaceOnUse" x1="415" y1="600" x2="520" y2="686"><stop offset="0" stop-color="#b00404"/><stop offset="1" stop-color="#d40808"/></linearGradient>
<filter id="blur8" x="-20%" y="-50%" width="140%" height="200%"><feGaussianBlur stdDeviation="8"/></filter>
<filter id="blur12" x="-50%" y="-50%" width="200%" height="200%"><feGaussianBlur stdDeviation="13"/></filter>
<filter id="blur3" x="-20%" y="-50%" width="140%" height="200%"><feGaussianBlur stdDeviation="3"/></filter>
<clipPath id="leftclip"><rect x="0" y="69" width="536" height="1131"/></clipPath>
</defs>
<g clip-path="url(#leftclip)">
<rect x="0" y="69" width="536" height="1131" fill="url(#floor)"/>
<radialGradient id="blob" cx="0.5" cy="0.5" r="0.5"><stop offset="0" stop-color="#000" stop-opacity="0.15"/><stop offset="0.45" stop-color="#000" stop-opacity="0.105"/><stop offset="0.75" stop-color="#000" stop-opacity="0.045"/><stop offset="1" stop-color="#000" stop-opacity="0"/></radialGradient>
<ellipse cx="255" cy="806" rx="315" ry="165" fill="url(#blob)"/>
<ellipse cx="62" cy="706" rx="62" ry="36" fill="#000" fill-opacity="0.085" filter="url(#blur12)"/>
<polygon points="150,758 362,766 380,850 132,842" fill="url(#ushadow)" filter="url(#blur3)"/>
<polygon points="446,700 500,735 560,800 560,880 470,862 455,800" fill="#000" fill-opacity="0.045" filter="url(#blur12)"/>
<polygon points="130.0,518.0 15.8,666.7 91.7,669.0 132.0,540.0" fill="url(#armL)" />
<polygon points="130.0,518.0 81.7,584.0 109.0,598.0 132.0,540.0" fill="#34005f" />
<ellipse cx="104.7" cy="581" rx="8" ry="8" fill="#c9c9c9"/>
<polyline points="130,518 15.8,666.7 91.7,669" fill="none" stroke="#4a0505" stroke-opacity="0.75" stroke-width="1.1" stroke-dasharray="5 4"/>
<ellipse cx="124" cy="541.5" rx="8" ry="8" fill="#c9c9c9"/>
<polygon points="361.5,372.0 360.5,395.0 408.8,595.0 391.0,493.0" fill="#5e1b0b" />
<polygon points="391.0,493.0 448.3,570.0 448.0,588.8 413.0,599.0 408.8,595.0" fill="#3e0074" />
<polygon points="413.0,599.0 448.0,588.8 524.4,686.7 433.8,683.5 408.8,595.0" fill="url(#armR)" />
<polygon points="448.3,570.0 515.0,651.0 524.4,686.7 448.0,588.8" fill="#f20c08" />
<ellipse cx="418" cy="561.7" rx="10.5" ry="8.5" fill="#c4c4c4" transform="rotate(20 418 561.7)"/>
<ellipse cx="398" cy="506.5" rx="2.2" ry="8" fill="#f4f4f4" transform="rotate(-28 398 506.5)"/>
<ellipse cx="406.7" cy="530" rx="2.4" ry="8.5" fill="#f4f4f4" transform="rotate(-32 406.7 530)"/>
<ellipse cx="415" cy="524" rx="2.4" ry="8" fill="#f4f4f4" transform="rotate(-35 415 524)"/>
<ellipse cx="436" cy="564" rx="2.6" ry="9" fill="#f4f4f4" transform="rotate(-30 436 564)"/>
<line x1="448" y1="588.75" x2="524.4" y2="686.7" stroke="#7a0a0a" stroke-width="1.2" stroke-dasharray="5 4"/>
<line x1="433.75" y1="683.5" x2="524.4" y2="686.7" stroke="#3a0505" stroke-width="1.2" stroke-dasharray="5 4"/>
<polygon points="432.5,683.0 443.5,685.0 450.5,722.5 458.0,772.5 466.5,840.5 457.0,840.0 447.5,755.0" fill="#27591b" />
<polygon points="66.5,761.0 51.2,820.0 138.8,823.8 154.5,759.0" fill="#2b601e" />
<polygon points="357.0,765.0 375.0,835.0 459.0,840.0 447.5,754.0" fill="#2b601e" />
<clipPath id="legL"><polygon points="66.5,761 51.25,820 138.75,823.75 154.5,759"/></clipPath>
<clipPath id="legR"><polygon points="357,765 375,835 466.5,840.5 447.5,754"/></clipPath>
<ellipse cx="96" cy="823" rx="43" ry="16" fill="#000" clip-path="url(#legL)"/>
<ellipse cx="420" cy="840" rx="45" ry="19" fill="#000" clip-path="url(#legR)"/>
<path d="M94.5,766.4L110.5,777.6M110.5,765.6L94.5,778.4" stroke="#000" stroke-width="3.2" fill="none" stroke-linecap="round" transform="rotate(5 102.5 772)"/>
<path d="M87.5,786.3L109.5,801.7M109.5,785.2L87.5,802.8" stroke="#000" stroke-width="3.6" fill="none" stroke-linecap="round" transform="rotate(0 98.5 794)"/>
<path d="M392,773.7L410,786.3M410,772.8L392,787.2" stroke="#000" stroke-width="3" fill="none" stroke-linecap="round" transform="rotate(0 401 780)"/>
<path d="M389.5,799.65L410.5,814.35M410.5,798.6L389.5,815.4" stroke="#000" stroke-width="3.4" fill="none" stroke-linecap="round" transform="rotate(0 400 807)"/>
<path d="M392,772L410,786M393,788L409,792" stroke="#000" stroke-width="1.8" fill="none"/>
<clipPath id="frontclip"><polygon points="167.0,390.0 360.5,395.0 447.5,755.0 357.5,767.5 240.0,763.8 154.5,760.0 67.5,760.0"/></clipPath>
<g clip-path="url(#frontclip)">
<polygon points="167.0,390.0 360.5,395.0 447.5,755.0 357.5,767.5 240.0,763.8 154.5,760.0 67.5,760.0" fill="#3b006e" />
<path d="M80.0,642.0C82.8,643.5 87.0,648.0 97.0,651.0C107.0,654.0 126.2,657.3 140.0,660.0C153.8,662.7 163.3,665.3 180.0,667.0C196.7,668.7 223.3,669.0 240.0,670.0C256.7,671.0 265.0,672.7 280.0,673.0C295.0,673.3 315.0,672.8 330.0,672.0C345.0,671.2 358.3,670.0 370.0,668.0C381.7,666.0 391.3,663.2 400.0,660.0C408.7,656.8 415.3,652.3 422.0,649.0C428.7,645.7 437.0,641.5 440.0,640.0 L440,380 L80,380 Z" fill="url(#redsh)"/>
<ellipse cx="128" cy="628" rx="34" ry="22" fill="#ea1c2a" fill-opacity="0.3" filter="url(#blur3)"/>
<ellipse cx="385" cy="622" rx="44" ry="22" fill="#ea1c2a" fill-opacity="0.3" filter="url(#blur3)"/>
<rect x="90" y="612" width="340" height="50" fill="#e81826" fill-opacity="0.22" filter="url(#blur3)"/>
<path d="M80.0,642.0C82.8,643.5 87.0,648.0 97.0,651.0C107.0,654.0 126.2,657.3 140.0,660.0C153.8,662.7 163.3,665.3 180.0,667.0C196.7,668.7 223.3,669.0 240.0,670.0C256.7,671.0 265.0,672.7 280.0,673.0C295.0,673.3 315.0,672.8 330.0,672.0C345.0,671.2 358.3,670.0 370.0,668.0C381.7,666.0 391.3,663.2 400.0,660.0C408.7,656.8 415.3,652.3 422.0,649.0C428.7,645.7 437.0,641.5 440.0,640.0" fill="none" stroke="#474747" stroke-width="13"/>
<path d="M80.0,642.0C82.8,643.5 87.0,648.0 97.0,651.0C107.0,654.0 126.2,657.3 140.0,660.0C153.8,662.7 163.3,665.3 180.0,667.0C196.7,668.7 223.3,669.0 240.0,670.0C256.7,671.0 265.0,672.7 280.0,673.0C295.0,673.3 315.0,672.8 330.0,672.0C345.0,671.2 358.3,670.0 370.0,668.0C381.7,666.0 391.3,663.2 400.0,660.0C408.7,656.8 415.3,652.3 422.0,649.0C428.7,645.7 437.0,641.5 440.0,640.0 L440,380 L80,380 Z" fill="none"/>
<ellipse cx="138.75" cy="683.75" rx="15" ry="14.5" fill="#dadada"/>
<ellipse cx="228" cy="697.5" rx="16" ry="15.5" fill="#dadada"/>
<ellipse cx="333.75" cy="700" rx="16.5" ry="16.0" fill="#dadada"/>
<ellipse cx="142.5" cy="740" rx="16" ry="15.5" fill="#dadada"/>
<ellipse cx="272" cy="746" rx="16" ry="15.5" fill="#dadada"/>
<ellipse cx="417.5" cy="740" rx="16.5" ry="16.0" fill="#dadada"/>
<ellipse cx="77" cy="739" rx="14.5" ry="14.1" fill="#dadada"/>
<path d="M120.0,580.0C120.8,577.5 123.0,570.5 125.0,565.0C127.0,559.5 129.2,554.2 131.7,547.0C134.2,539.8 137.3,530.3 140.0,522.0C142.7,513.7 145.0,505.3 148.0,497.0C151.0,488.7 155.2,479.8 158.0,472.0C160.8,464.2 162.6,456.3 165.0,450.0C167.4,443.7 170.0,438.2 172.5,434.0C175.0,429.8 177.5,427.3 180.0,425.0C182.5,422.7 184.2,420.3 187.5,420.0C190.8,419.7 195.2,422.0 199.5,423.0C203.8,424.0 208.8,425.8 213.0,426.0C217.2,426.2 221.5,425.5 225.0,424.5C228.5,423.5 231.0,420.2 234.0,420.0C237.0,419.8 240.0,421.0 243.0,423.0C246.0,425.0 248.5,430.0 252.0,432.0C255.5,434.0 260.2,435.2 264.0,435.0C267.8,434.8 271.8,431.9 274.5,430.5C277.2,429.1 277.5,427.2 280.5,426.8C283.5,426.2 289.0,427.9 292.5,427.5C296.0,427.1 298.2,424.2 301.5,424.5C304.8,424.8 308.2,428.0 312.0,429.0C315.8,430.0 320.5,431.5 324.0,430.5C327.5,429.5 329.8,423.5 333.0,423.0C336.2,422.5 340.5,426.2 343.5,427.5C346.5,428.8 348.8,428.9 351.0,430.5C353.2,432.1 355.3,433.8 357.0,437.0C358.7,440.2 359.5,444.5 361.0,450.0C362.5,455.5 364.3,463.8 366.0,470.0C367.7,476.2 369.0,481.5 371.0,487.0C373.0,492.5 375.7,497.5 378.0,503.0C380.3,508.5 382.7,514.7 385.0,520.0C387.3,525.3 389.8,530.0 392.0,535.0C394.2,540.0 397.0,547.5 398.0,550.0 L460,560 L460,380 L100,380 Z" fill="#73220f"/>
</g>
<polygon points="186.8,369.3 362.2,371.2 360.3,395.2 166.5,390.8" fill="#7b2611" />
<line x1="167" y1="390" x2="360.5" y2="395" stroke="#2a0c05" stroke-width="1" stroke-dasharray="6 4"/>
<path d="M183.7,411.7C183.2,413.3 181.4,418.6 180.7,421.5C179.9,424.4 179.4,427.8 179.2,429.0" fill="none" stroke="#000" stroke-width="3.4" stroke-linecap="round"/>
<path d="M210.7,411.7C210.7,413.1 210.7,418.6 210.7,420.0" fill="none" stroke="#000" stroke-width="3" stroke-linecap="round"/>
<path d="M230.2,410.2C230.2,411.3 230.2,415.9 230.2,417.0" fill="none" stroke="#000" stroke-width="3" stroke-linecap="round"/>
<path d="M244.5,411.7C244.6,413.2 245.1,419.2 245.2,420.7" fill="none" stroke="#000" stroke-width="3" stroke-linecap="round"/>
<path d="M273.7,408.0C273.8,409.2 273.9,413.4 274.2,415.5C274.4,417.6 275.0,419.8 275.2,420.7" fill="none" stroke="#000" stroke-width="3.2" stroke-linecap="round"/>
<path d="M298.5,401.2C298.8,403.3 298.9,411.2 300.0,414.0C301.1,416.8 304.3,417.1 305.2,417.7" fill="none" stroke="#000" stroke-width="3.4" stroke-linecap="round"/>
<path d="M323.2,409.5C323.6,411.5 324.6,418.9 325.5,421.5C326.4,424.1 328.0,424.6 328.5,425.2" fill="none" stroke="#000" stroke-width="3.4" stroke-linecap="round"/>
<path d="M348.0,402.0C348.8,404.2 351.1,412.1 352.5,415.5C353.9,418.9 355.6,421.1 356.2,422.2" fill="none" stroke="#000" stroke-width="3.6" stroke-linecap="round"/>
<path d="M220.5,375.0C223.8,375.2 236.8,376.2 240.0,376.5" fill="none" stroke="#000" stroke-width="1.6" stroke-linecap="round"/>
<path d="M273.0,372.0C274.2,371.8 279.2,371.0 280.5,370.8" fill="none" stroke="#000" stroke-width="1.8" stroke-linecap="round"/>
<path d="M332.2,382.5C335.1,382.8 346.6,383.8 349.5,384.0" fill="none" stroke="#000" stroke-width="1.8" stroke-linecap="round"/>
<path d="M309.0,386.7C312.0,386.9 321.0,387.3 327.0,387.9C333.0,388.4 342.0,389.6 345.0,390.0" fill="none" stroke="#000" stroke-width="2" stroke-linecap="round"/>
<path d="M193.5,389.2C195.8,388.6 204.8,386.1 207.0,385.5" fill="none" stroke="#000" stroke-width="2" stroke-linecap="round"/>
<path d="M195.7,384.7C197.1,384.3 202.6,382.9 204.0,382.5" fill="none" stroke="#000" stroke-width="1.6" stroke-linecap="round"/>
<path d="M218.2,392.2C221.2,391.6 233.2,389.1 236.2,388.5" fill="none" stroke="#000" stroke-width="2" stroke-linecap="round"/>
<path d="M262.5,393.7C263.8,393.3 267.8,391.7 270.0,391.2C272.2,390.7 275.0,390.8 276.0,390.7" fill="none" stroke="#000" stroke-width="2.4" stroke-linecap="round"/>
<path d="M340.5,378.0C343.5,377.9 355.5,377.8 358.5,377.7" fill="none" stroke="#000" stroke-width="1.6" stroke-linecap="round"/>
<path d="M315.0,374.2C317.5,374.1 327.5,373.6 330.0,373.5" fill="none" stroke="#000" stroke-width="1.4" stroke-linecap="round"/>
<path d="M180.0,378.7C182.0,378.8 190.0,379.4 192.0,379.5" fill="none" stroke="#000" stroke-width="1.4" stroke-linecap="round"/>
<path d="M243.0,392.2C244.8,392.2 251.8,392.2 253.5,392.2" fill="none" stroke="#000" stroke-width="1.4" stroke-linecap="round"/>
<path d="M282.0,392.4C283.5,392.4 289.5,392.5 291.0,392.5" fill="none" stroke="#000" stroke-width="1.4" stroke-linecap="round"/>
<path d="M297.0,393.0C298.8,393.1 305.8,393.2 307.5,393.3" fill="none" stroke="#000" stroke-width="1.4" stroke-linecap="round"/>
<path d="M322.5,393.7C324.5,393.7 332.5,393.7 334.5,393.7" fill="none" stroke="#000" stroke-width="1.4" stroke-linecap="round"/>
<path d="M343.5,394.2C345.2,394.2 352.2,394.2 354.0,394.2" fill="none" stroke="#000" stroke-width="1.4" stroke-linecap="round"/>
<path d="M172.5,391.2C174.5,391.1 182.5,390.8 184.5,390.7" fill="none" stroke="#000" stroke-width="1.4" stroke-linecap="round"/>
<path d="M243.0,382.5C245.5,382.2 255.5,381.2 258.0,381.0" fill="none" stroke="#000" stroke-width="1.2" stroke-linecap="round"/>
<path d="M285.0,379.5C287.8,379.4 298.8,378.8 301.5,378.7" fill="none" stroke="#000" stroke-width="1.2" stroke-linecap="round"/>
<g fill="none" stroke="#000" stroke-linecap="round" stroke-linejoin="round">
<path d="M164,495.5Q169,484 174,474.5Q176,466 180,462.5Q187,460.5 195.75,461.75" stroke="#6e1606" stroke-width="2"/>
<path d="M295.5,461Q302,460.5 306,462.5Q309.5,468 312,474.5Q315,481 319.5,483.5Q325,485 332.25,484.25" stroke="#6e1606" stroke-width="2"/>
<path d="M238.5,508.25Q234.5,527 231.75,545Q229,562 228.75,578Q229,582 231.75,582.5Q240,582.5 247.5,581Q255,579 262.5,576.5" stroke-width="2.6"/>
<path d="M263.25,606.5Q270,607.5 277.5,606.5Q288,603.5 297,599Q305,594.5 311.25,589.25" stroke-width="2.6"/>
<path d="M185,515.8L187,517.2M292.4,524.5H295.8" stroke-width="2"/>
</g>
<path d="M189,497Q189.5,491 193.5,488Q202,483.5 210,483.5Q215,484.5 214.5,488Q214.5,494 211.5,498.5Q207,505.5 201,509Q195,509.5 192,506Q188.5,502 189,497Z" fill="#2f94cf"/>
<path d="M280.5,500Q281,494.5 285,491Q290,487.5 297,488Q304,488.5 307.5,492.5Q308.5,497.5 306,501.5Q303,506.5 298.5,509Q291,511.5 285,510.5Q280,506.5 280.5,500Z" fill="#2f94cf"/>
<path d="M202,492l-2.5,7 M205.5,490.5l-1,4.5 M197,504l2,-2.5" stroke="#c84a5c" stroke-width="1.5" fill="none" stroke-linecap="round"/>
<path d="M286.5,495.5v7 M293.5,499.5a1.8,2 0 1 0 0.1,0 M296,497.5l1.5,2" stroke="#c84a5c" stroke-width="1.4" fill="none" stroke-linecap="round"/>
<polyline points="167,390 67.5,760" stroke="#3a0808" stroke-width="0.8" fill="none" stroke-opacity="0.6"/>
<polyline points="360.5,395 447.5,755" stroke="#2a0505" stroke-width="1" fill="none" stroke-dasharray="4 3" stroke-opacity="0.8"/>
</g>
<g id="toolbar" fill="none" stroke-linecap="round" stroke-linejoin="round">
<polyline points="37.6,19.6 21.7,34.2 37.6,48.9" stroke="#3c3c3c" stroke-width="4" stroke-linecap="butt" stroke-linejoin="miter"/>
<path d="M219.5,32.6H215.8V51.3H240.9V32.6H237.2 M227.9,40.2V16.2 M222.1,22.4L227.9,15.9L234.4,22.4" stroke="#3c3c3c" stroke-width="1.6" stroke-linecap="butt" stroke-linejoin="miter"/>
<path d="M300.6,27.2V15.5H316.3L324.7,22.9V27.2 M316.3,15.5V22.9H324.7" stroke="#3c3c3c" stroke-width="1.7" stroke-linejoin="miter" stroke-linecap="butt"/>
<path d="M300.6,42.5H296.6Q294.3,42.5 294.3,40.2V32Q294.3,29.7 296.6,29.7H328.4Q330.7,29.7 330.7,32V40.2Q330.7,42.5 328.4,42.5H324.7" stroke="#3c3c3c" stroke-width="1.7"/>
<path d="M300.6,42.5V51.4H324.7V42.5" stroke="#3c3c3c" stroke-width="1.7" stroke-linejoin="miter" stroke-linecap="butt"/>
<path d="M303,42.6H322.2 M303.2,45.7H322 M303.2,48.7H322" stroke="#3c3c3c" stroke-width="1.5" stroke-linecap="butt"/>
<g transform="translate(553.6,51.4) rotate(-45)" stroke="#3c3c3c" stroke-width="1.7"><path d="M0.6,0L12,-7.3H40.6Q44.4,-7.3 44.4,-3.5V3.5Q44.4,7.3 40.6,7.3H12Z" stroke-linejoin="round"/><path d="M0,0L6.2,-3.9L6.2,3.9Z" fill="#3c3c3c"/></g>
<g stroke="#2e7cd0" stroke-width="1.6"><path d="M652.4,38.4L671.6,17.9Q675.6,14.2 678.2,16.1Q680.4,18.6 677.4,23.4L656.3,44.2"/><path d="M652.4,38.4Q647.2,35.4 643.6,40.2Q641.2,46.4 638.6,48.1Q636.2,49.3 633.9,48.3Q638.2,52 646.2,51.2Q653.6,50.5 656,46.6Q657,45.2 656.3,44.2Z"/></g>
<g transform="translate(741.2,33.4) rotate(-42.5)" stroke="#3c3c3c" stroke-width="1.7"><rect x="-20.6" y="-8.8" width="41.2" height="17.6" rx="4.4"/></g>
<path d="M806.4,15.4Q815,14.2 825.2,16.4Q835.4,14.2 844,15.4L843.6,18.6L842.4,19Q842,29.4 834.6,29.6Q828.4,29.6 827.2,20.2Q825.2,19 823.2,20.2Q822,29.6 815.8,29.6Q808.4,29.4 808,19L806.8,18.6Z M809.7,18.3Q809.9,27.9 815.8,27.9Q821.2,27.9 822,18.5Q815.8,17.3 809.7,18.3Z M828.4,18.5Q829.2,27.9 834.6,27.9Q840.5,27.9 840.7,18.3Q834.6,17.3 828.4,18.5Z" fill="#3c3c3c" stroke="none" fill-rule="evenodd"/>
<path d="M823.6,27.4Q825,25.4 826.6,27.4L828.2,34.2Q831.6,35.6 831.4,38.8Q830.8,42.4 827.6,41.8Q825,40.6 822.6,41.8Q819.4,42.4 818.8,38.8Q818.6,35.6 822,34.2Z" fill="#3c3c3c" stroke="none"/>
<path d="M825,47Q827.4,44.4 831.4,45.2Q835.4,46.6 838,48.2Q840,49 841.6,45.4Q841.8,52.4 836,52.6Q829.6,52.4 825,49.4Q820.4,52.4 814,52.6Q808.2,52.4 808.4,45.4Q810,49 812,48.2Q814.6,46.6 818.6,45.2Q822.6,44.4 825,47Z" fill="#3c3c3c" stroke="none"/>
<g stroke="#3c3c3c" stroke-width="1.6"><path d="M907.75,15.4L925.9,32.8Q922.6,33.2 920.6,35.4L904.4,50.4Q901.9,52.4 899.6,50.2L889.4,40Q887.2,37.4 889.4,34.6Z"/><path d="M926.5,38.6Q930.3,44 930.3,46.4Q930.3,50.2 926.5,50.2Q922.7,50.2 922.7,46.4Q922.7,44 926.5,38.6Z"/></g>
<g transform="translate(976.2,50.6) rotate(-43.7)" stroke="#3c3c3c" stroke-width="1.6"><path d="M0,-1.3H4L8,-3.8H32.2V3.8H8L4,1.3H0Z"/><path d="M32.2,-10H36V10H32.2Z"/><path d="M36,-3.5H44.2Q47.7,-3.5 47.7,0Q47.7,3.5 44.2,3.5H36"/></g>
<rect x="1058.8" y="15" width="38.4" height="37.6" rx="4.5" fill="#ffffff" stroke="none"/>
<path d="M1360.7,30.2A16.5,16.5 0 1 1 1364.5,44.3" stroke="#3c3c3c" stroke-width="1.6"/><path d="M1357.3,20.6L1360.2,30.2L1369.6,27.3" stroke="#3c3c3c" stroke-width="1.6" stroke-linejoin="miter"/>
<path d="M1477.1,30.2A16.5,16.5 0 1 0 1473.3,44.3" stroke="#bcbcbc" stroke-width="1.6"/><path d="M1480.1,20.6L1477.4,30.2L1468,27.3" stroke="#bcbcbc" stroke-width="1.6" stroke-linejoin="miter"/>
<g stroke="#3c3c3c" stroke-width="1.8"><path d="M1526.8,19.6H1563.8"/><path d="M1538.4,19.4Q1538.6,16 1541,16H1549.6Q1552,16 1552.2,19.4"/><path d="M1530.4,21.4V49Q1530.4,51.4 1532.8,51.4H1557.8Q1560.2,51.4 1560.2,49V21.4"/><path d="M1537.3,27.4V45.8 M1545.3,27.4V45.8 M1553.1,27.4V45.8" stroke-width="1.6"/></g>
</g>
<rect x="0" y="68.55" width="1600" height="1.15" fill="#c4c4c4"/>
<rect x="535.95" y="69" width="1.5" height="1131" fill="#a4a4a4"/>
<rect x="537.45" y="69.7" width="0.9" height="1131" fill="#fbfbfb"/>
<path d="M537.3,1183.5A17.6,17.6 0 0 1 554.9,1201.1" stroke="#333" stroke-width="1.5" fill="none" stroke-linecap="round"/>
</svg>
</body></html>
